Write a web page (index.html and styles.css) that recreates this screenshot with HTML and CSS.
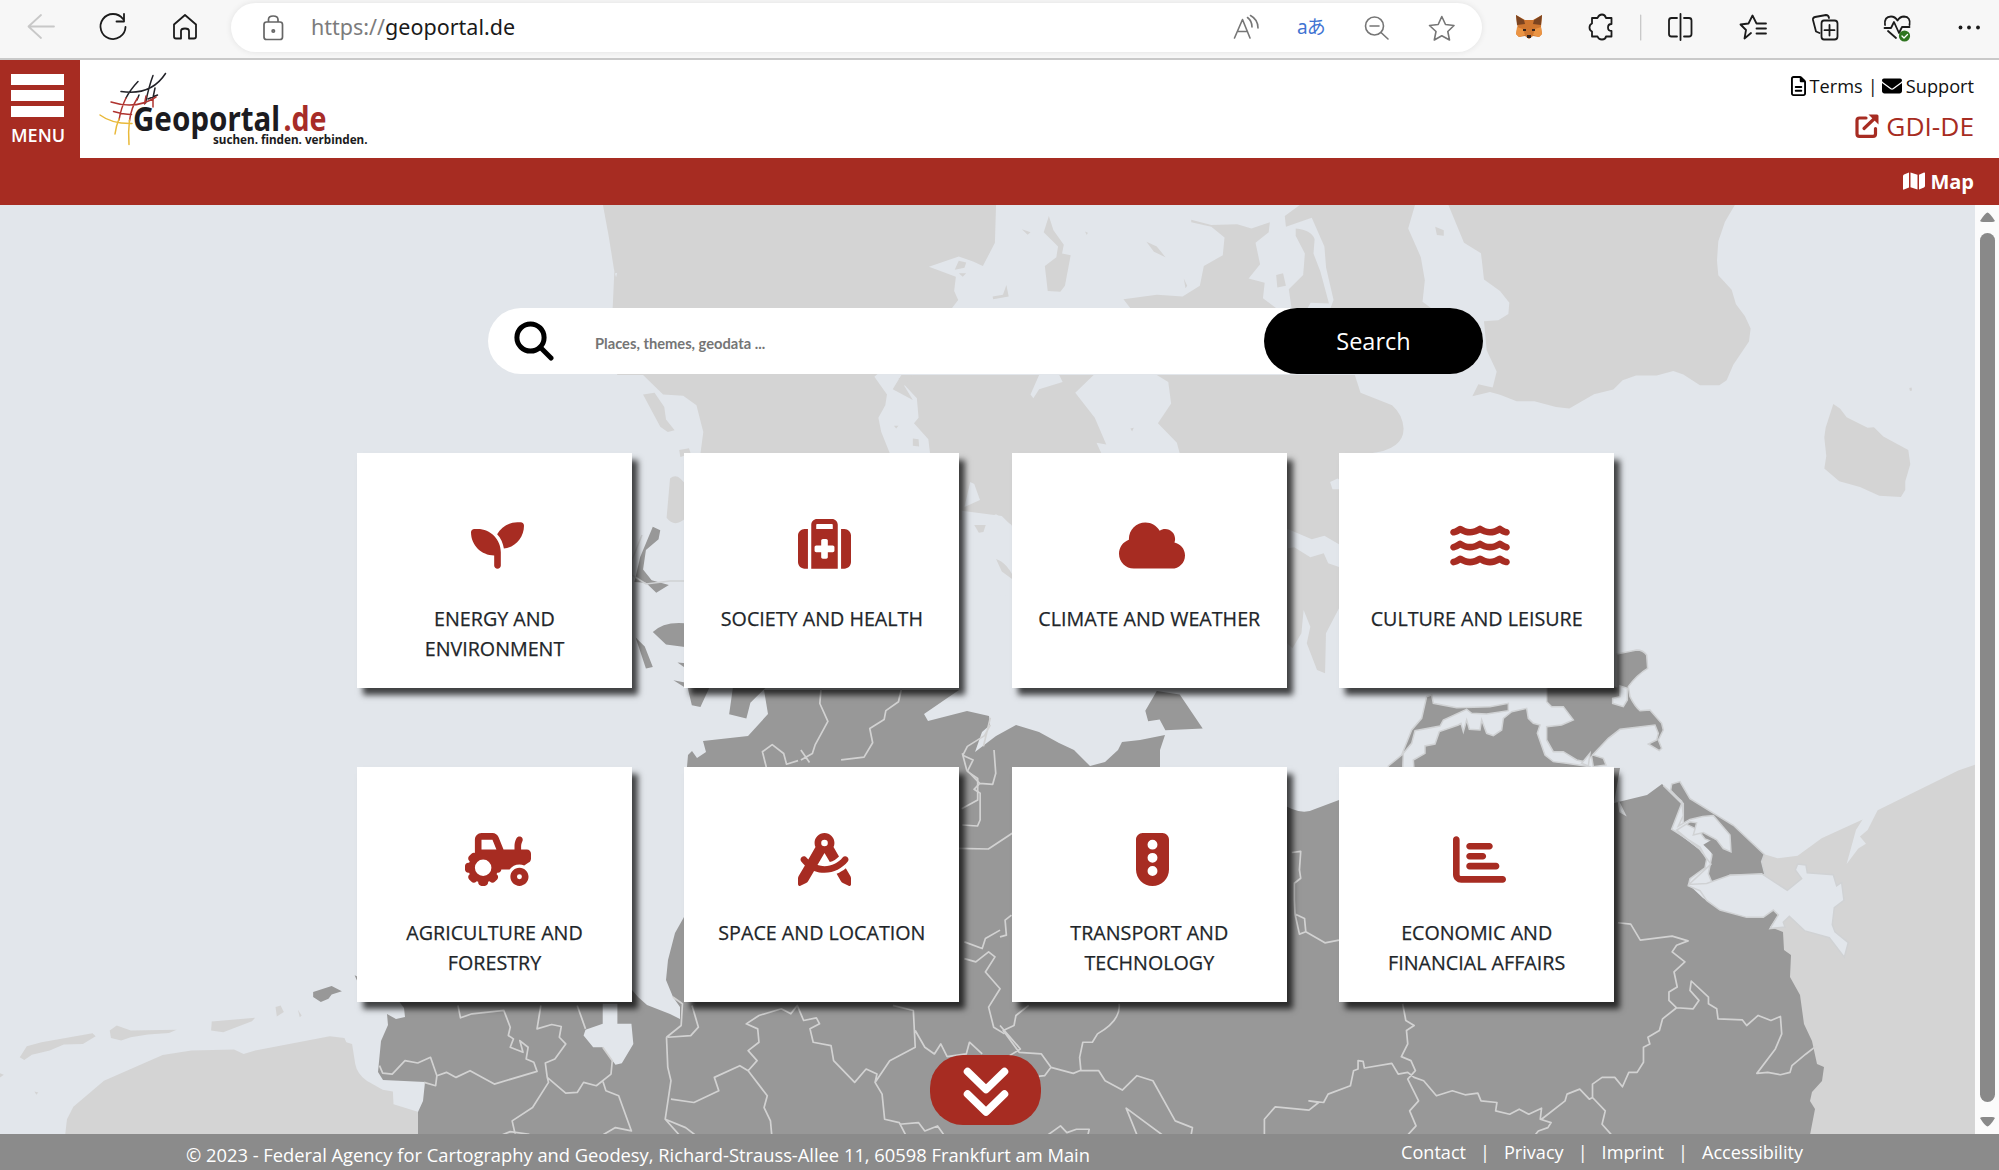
FILE: index.html
```html
<!DOCTYPE html>
<html lang="en">
<head>
<meta charset="utf-8">
<title>Geoportal.de</title>
<link rel="stylesheet" href="styles.css">
</head>
<body>
<div class="toolbar">
  <svg class="tools-left" width="231" height="56" viewBox="0 0 231 56">
    <path class="back" d="M54 26.500H29M41 15L28.500 26.500 41 38"/>
    <path d="M123 19A12.500 12.500 0 1 0 125.500 27M124 14V21.500H116.500"/>
    <path d="M174 24.500L185 15 196 24.500V36.500Q196 38.500 194 38.500H189V31Q189 28.500 185 28.500T181 31V38.500H176Q174 38.500 174 36.500Z"/>
  </svg>
  <div class="address">
    <svg class="lock" width="22" height="26" viewBox="262 14 22 26"><rect x="264" y="21" width="18.500" height="17.500" rx="2.500"/><path d="M268.500 21V18.500Q268.500 15 273.200 15T278 18.500V21"/><circle cx="273.300" cy="30" r="1.200"/></svg>
    <span class="url"><i>https://</i>geoportal.de</span>
    <svg class="address-tools" width="232" height="30" viewBox="1230 12 232 30">
      <path d="M1234.500 37L1242.500 18.500 1250 37M1237.500 30.500H1247.500M1247.500 16.500Q1252 20 1252 26M1250.500 14.500Q1258 18.500 1258 27"/>
      <circle cx="1374.500" cy="25" r="9"/><path d="M1381 31.500L1388 38M1370 25H1379"/>
      <path d="M1441.800 15.500L1445.500 23.500 1454 24.500 1447.800 30.500 1449.500 39 1441.800 34.800 1434.300 39 1436 30.500 1429.500 24.500 1438.200 23.500Z"/>
      <text x="1297" y="33">aあ</text>
    </svg>
  </div>
  <svg class="tools-right" width="517" height="56" viewBox="1482 0 517 56">
    <g class="fox"><path fill="#cf762f" d="M1516 15L1525 20H1533L1542 15 1541 27 1542 34 1539 37 1533 36 1529 39 1525 36 1519 37 1516 34 1517.500 27Z"/><path fill="#7c4420" d="M1516 15L1524 20 1525 24 1517 25ZM1542 15L1534 20 1533 24 1541 25Z"/><path fill="#eb9443" d="M1517 27L1523 29 1525 35 1519 37 1516 34ZM1541 27L1535 29 1533 35 1539 37 1542 34Z"/><path fill="#36251d" d="M1523 29H1526V31H1523ZM1532 29H1535V31H1532ZM1527 35H1531V38H1527Z"/></g>
    <path d="M1592 18H1597.500Q1599 14.500 1602 14.500T1606 18H1611.500V24Q1608 24 1608 27.500T1611.500 31V36.500H1606Q1605.500 39.500 1602 39.500T1597.500 36.500H1592V31.500Q1589.500 30.500 1589.500 27.500T1592 23.500Z"/>
    <path class="sep" d="M1640.700 15V40"/>
    <path d="M1677 18H1671.500Q1669 18 1669 20.500V34Q1669 36.500 1671.500 36.500H1677M1684 18H1689Q1691.500 18 1691.500 20.500V34Q1691.500 36.500 1689 36.500H1684M1680.500 14V40"/>
    <path d="M1751 33L1744.500 38.500 1746 30 1740.500 24.500 1748.500 23.500 1752.500 15.500 1756.500 23.500H1766M1756.500 28.500H1766M1756.500 33.500H1766"/>
    <path d="M1819.500 33L1816 31.500 1813 20Q1812.500 17.500 1815 17L1826 15Q1828.500 15 1829 18M1824 20.500H1834.500Q1837.500 20.500 1837.500 23.500V36.500Q1837.500 39.500 1834.500 39.500H1824Q1821.500 39.500 1821.500 36.500V23.500Q1821.500 20.500 1824 20.500ZM1829.500 25V35.500M1824.500 30.200H1834.500"/>
    <path d="M1885 25Q1884 16.500 1891 16.500 1895 16.500 1897.500 20.500 1900 16.500 1904 16.500 1911 17 1909.500 25M1888 31L1896 38M1884.500 28H1891L1894 22 1899 33 1902 27H1909.500"/>
    <circle class="ok" cx="1904.500" cy="36" r="5.600"/><path class="tick" d="M1902 36L1904 38 1907.500 34.500"/>
    <g class="dots"><circle cx="1960.500" cy="27.500" r="1.900"/><circle cx="1969" cy="27.500" r="1.900"/><circle cx="1978" cy="27.500" r="1.900"/></g>
  </svg>
</div>

<header class="header">
  <button class="menu"><span></span><span></span><span></span><b>MENU</b></button>
  <svg class="logo" width="280" height="90" viewBox="95 66 280 90">
    <g class="grid-lines">
      <path class="k" d="M121 91.500Q151 96 165.500 73.500M138 81.500Q130 90 126 98M153 75.500Q149 86 145.500 103M155 88L152.500 100M139 95L137 100M148 99L157.500 95"/>
      <path class="r" d="M126 98Q121 108 119 120M137.500 98Q131 108 129.500 121M111 102Q136 110 156 97M113.500 111.500Q124 114.500 131.500 114.500M146 96L144.500 104M153 99V107"/>
      <path class="y" d="M119 119Q116 126 115 134M129.500 120Q128 132 129 144.500M100 115Q112 124 132 123.500"/>
    </g>
    <text class="brand" x="133" y="130.500" textLength="147" lengthAdjust="spacingAndGlyphs">Geoportal</text>
    <text class="brand red" x="283.500" y="130.500" textLength="43" lengthAdjust="spacingAndGlyphs">.de</text>
    <text class="claim" x="213" y="144" textLength="154.500" lengthAdjust="spacingAndGlyphs">suchen. finden. verbinden.</text>
  </svg>
  <nav class="top-links">
    <div class="row">
      <svg width="15" height="20" viewBox="0 0 384 512"><path d="M64 464c-8.800 0-16-7.200-16-16V64c0-8.800 7.200-16 16-16H224v80c0 17.700 14.300 32 32 32h80V448c0 8.800-7.200 16-16 16H64zM64 0C28.700 0 0 28.700 0 64V448c0 35.300 28.700 64 64 64H320c35.300 0 64-28.700 64-64V154.500c0-17-6.700-33.300-18.700-45.300L274.700 18.700C262.700 6.700 246.500 0 229.500 0H64zm56 256a24 24 0 0 0 0 48H264a24 24 0 0 0 0-48H120zm0 96a24 24 0 0 0 0 48H264a24 24 0 0 0 0-48H120z"/></svg>
      <a>Terms</a><span class="bar">|</span>
      <svg width="20" height="20" viewBox="0 0 512 512"><path d="M48 64C21.500 64 0 85.500 0 112c0 15.100 7.100 29.300 19.200 38.400L236.800 313.600c11.400 8.500 27 8.500 38.400 0L492.800 150.400c12.100-9.100 19.200-23.300 19.200-38.400c0-26.500-21.500-48-48-48H48zM0 176V384c0 35.300 28.700 64 64 64H448c35.300 0 64-28.700 64-64V176L294.400 339.200c-22.800 17.100-54 17.100-76.800 0L0 176z"/></svg>
      <a>Support</a>
    </div>
    <div class="row gdi">
      <svg width="24" height="24" viewBox="0 0 24 24"><path class="ext" d="M11 4H4.500Q2 4 2 6.500V20Q2 22.300 4.500 22.300H18Q20.500 22.300 20.500 20V14.500M9 14.500L20 4"/><path d="M13.500 .5H22Q23.500 .5 23.500 2V10.500Z"/></svg>
      <a>GDI-DE</a>
    </div>
  </nav>
</header>
<div class="mapbar">
  <svg width="22" height="18" viewBox="0 0 22 18"><path d="M0 4Q0 3 1 2.500L6 .5V15.500L1 17.500Q0 18 0 17ZM7.500 .5L14.500 2.800V17.500L7.500 15.300ZM16 2.700L21 .5Q22 .3 22 1.300V14Q22 15 21 15.400L16 17.500Z"/></svg>
  <a>Map</a>
</div>

<main class="main">
  <div class="stage">
    <svg class="map" width="1975" height="929" viewBox="0 205 1975 929">
      <!-- Denmark -->
      <g transform="translate(600 200) scale(.574 .3571)">
        <path class="land" d="M5 13H690L688 120 667 185 650 172 625 158 573 187 620 215 617 255 624 280 612 305 478 495 500 545 497 575 485 610 490 650 505 710V1300H200L175 710 180 650 168 575 145 548 110 545 75 490 30 490 22 305 25 200 15 100Z"/>
        <path class="land" d="M75 545L95 540 112 580 115 615 130 645 118 650 105 635ZM138 700L155 695 158 710 140 720ZM122 780Q135 760 150 800V890Q130 920 116 890Z"/>
        <path class="land" d="M520 500L552 555 555 610 547 625 572 670 575 710 600 900 635 895 655 905 690 880 717 910V1060L900 900 875 715 865 680 882 685 862 610 828 540 860 490H800L806 510 765 530 755 555 750 545 765 490H545Z"/>
        <path class="sea" d="M645 790L652 795 662 840 635 860ZM630 870L700 885 725 925V1110L630 1100Z"/>
        <path class="land" d="M652 910L672 910 668 930 660 932ZM690 1005Q710 1015 725 1070L700 1040ZM545 490L530 520 545 560 510 530 525 490ZM1030 55L1065 70 1110 68 1135 80 1167 62 1165 90 1142 120 1150 180 1130 220 1158 232 1155 275 1180 305H925L912 278 970 265 1015 270 1045 240 1052 185 1085 155 1088 105 1065 75 1030 62Z"/>
        <path class="land" d="M970 490L990 510 995 570 972 625 1005 680 1010 710 1196 920 1240 950 1262 940 1288 965V710H1340Q1400 700 1400 640 1398 600 1380 575L1325 540 1315 490ZM1220 13H1420L1408 80 1430 160 1437 225 1433 285 1450 305H1272L1278 280 1265 190 1262 130 1240 50 1195 75 1193 45ZM1212 80Q1240 85 1245 110L1243 150 1255 200 1270 290 1238 288 1232 305H1205L1200 250 1225 210 1228 150 1212 100ZM782 45L790 85 808 125 805 150 820 155 810 240 802 257 780 255 775 185 795 160 798 130 773 90ZM735 82L750 90 745 97ZM845 88L850 92 848 98ZM952 117L970 130 985 160 965 145ZM708 238L712 270 685 278 684 270 702 265ZM625 170L638 175 635 190 618 195ZM625 205L638 205 632 215ZM1017 220L1023 240 1020 247ZM1178 210L1190 205 1195 240 1180 245ZM1455 75L1470 85 1470 100 1458 98ZM512 632L520 632 516 640ZM545 668L555 670 556 690 545 688ZM924 640L930 638 927 648Z"/>
        <path class="sea" d="M1272 790L1285 780 1300 795V810H1276ZM30 204L28 216 26 206Z"/>
      </g>
      <g transform="translate(980 440) scale(.4464 .3333)">
        <path class="land" d="M690 325L704 322 740 352 770 340 780 370 806 382V500L775 580 773 700 755 690 732 610 740 560 725 510 720 580 700 625 680 600Z"/>
      </g>
      <!-- Sweden, Bornholm and Poland -->
      <g transform="translate(1500 200) scale(.3333 .4847)">
        <path class="land" d="M-155 10H705L675 45 655 85 651 125 655 155 695 185 708 215 735 240 752 265 747 292 700 340 680 372 658 382H600L550 360 520 353 470 362H408L368 372 340 391 282 401 208 430 168 427 103 415H50L0 402-30 396-83 405-65 380-22 387-10 354-40 310-48 250-5 248 25 235 28 212 0 188-48 164-57 110-108 88Z"/>
        <path class="land" d="M1000 421L1020 430 1040 448 1103 470 1122 469 1150 488 1225 516 1231 545 1216 580V598L1203 613 1138 610 1080 592 1018 580 973 554 979 528 973 490 977 470ZM1228 388L1235 387 1236 393 1230 394Z"/>
        <path class="land" d="M1425 1165L1375 1177 1133 1259 1103 1300 1080 1313 1098 1328 1075 1338 1040 1370 1068 1300 1088 1278 965 1317 893 1353 833 1358 793 1350 700 1400 840 1950H1425Z"/>
      </g>
      <!-- Netherlands and the West Frisian islands -->
      <g transform="translate(0 900) scale(.6378 .3347)">
        <path class="land" d="M102 705L105 655 115 618 163 540 255 463 300 450 367 447 382 460 400 450 517 407 540 412 543 425 552 430 557 490Q560 520 575 540L600 567 616 572 617 610 655 633 662 705ZM31 470L42 437 65 425 145 398 150 407 130 430 100 432 78 450 50 462 38 478ZM172 390L183 375 205 390 277 388 265 397 232 402 205 410 190 420 174 412ZM332 363L400 352 395 362 350 395 331 390ZM432 320L440 315 445 335 434 348ZM467 328L473 345 470 350ZM0 518L6 522 0 530ZM54 572L60 575 57 582Z"/>
      </g>
      <!-- Germany -->
      <path class="de" d="M764 690H959L924 714 928 721 967 711 989 716 990 725 982 732 975 752 996 736 1016 725 1039 732 1059 743 1074 750 1090 766 1105 762 1118 750 1122 742 1140 740 1165 735 1160 750V770L1278 801Q1300 817 1315 809L1339 800V790L1380 780 1390 768H1620L1614 803 1647 795 1662 784 1682 803 1672 829 1700 850 1710 864 1688 884 1703 898 1720 910 1747 917H1763L1773 910 1778 915 1770 927 1783 932 1784 950 1791 955 1790 977 1800 995 1804 1024 1812 1041 1817 1064 1824 1067 1822 1081 1812 1092 1810 1101 1815 1109 1810 1135H418V1112L423 1101 425 1082 383 1080 378 1072 381 1041 388 1025 387 1014 396 1019 405 1017 404 1008 398 1000 632 990 638 997 647 1005 670 1014 680 1019V1007L673 997 666 980 668 960 675 933 684 917 687 767 688 755 692 751 697 758 706 752 703 741 748 736 768 714Z"/>
      <g class="de" transform="translate(600 200) scale(.574 .3571)">
        <path d="M152 1360L160 1415 175 1420 192 1360ZM232 1360L225 1440 255 1452 262 1408 292 1360ZM970 1375L1010 1385 1050 1480 985 1485 975 1455 955 1460 950 1430ZM92 915L105 925 102 950 80 980 75 1035 90 1065 120 1078 98 1100 80 1072 60 1070 70 1000ZM92 1210Q110 1180 148 1185V1252L115 1245ZM62 1225L78 1250 92 1308 80 1312ZM135 1295L150 1297 148 1310ZM128 1345L150 1352 148 1365Z"/>
      </g>
      <path class="shore" d="M642 535L632 560 632 575 646 584 670 581H684"/>
      <!-- Darss and Ruegen -->
      <g transform="translate(1390 640) scale(.3333)">
        <path class="de coast" d="M-5 378L35 345 65 270 95 235 110 170 125 165 130 190 200 203 300 200 355 190V212L290 222 245 220 230 208 160 240 150 258 75 272 65 310 40 340 38 390H-5ZM72 390L70 360 105 340V318L135 312 148 275 205 255 213 250 220 275 230 240 238 268 270 270 275 240 290 280 310 287 335 270 340 235 365 215 410 205 415 235 430 250 450 255 442 280 465 345 490 365 530 370 600 380V390ZM470 185V140H680V42L740 30Q760 30 770 45L773 85Q740 105 715 140L720 170Q735 200 750 212L780 210 815 250 820 270 805 300 815 325 808 332 775 312 800 300 805 280 795 255 690 268 655 295 608 345 640 355 648 375 610 380 605 350 585 365 560 360 520 335 490 335 470 300V260L515 255 550 240 520 200 485 200Z"/>
        <path class="sea coast" d="M690 138L712 145V180L700 200 668 190V175L690 170ZM575 370L600 340 595 378Z"/>
      </g>
      <g transform="translate(1500 200) scale(.3333 .4847)">
        <path class="de coast" d="M512 1218L515 1205 540 1200 570 1235 640 1265 700 1290 793 1350 785 1365 795 1392 690 1393 640 1415 625 1390 635 1355 640 1325 615 1318 595 1300 550 1285 550 1245Z"/>
        <path class="sea coast" d="M608 1272L640 1270 690 1310 693 1345 670 1338 650 1320 610 1305 580 1310 590 1285 570 1283 530 1300 600 1340 633 1370 567 1412 620 1410 690 1393 785 1390 862 1424 905 1400 886 1382 893 1370 918 1372 922 1388 1000 1392 1010 1415 1025 1408 1032 1445 1003 1460 997 1495 1005 1510 1045 1532 1033 1562 988 1522 915 1508 868 1478 850 1490 855 1500 810 1503 835 1475 820 1465 790 1480 740 1480 660 1465 620 1445 600 1425 565 1415 570 1400 615 1378 620 1360 600 1335 515 1298 545 1245 490 1208 545 1240 550 1270 535 1292 570 1278Z"/>
        <path class="sea coast" d="M355 1240L375 1268 360 1262Z"/>
        <path class="de" d="M610 1330L640 1318 655 1335 645 1355 625 1340Z"/>
      </g>
      <g transform="translate(0 900) scale(.6378 .3347)">
        <path class="sea" d="M945 310H968V370H990L993 430 975 488 965 492 945 440 930 440 915 405 918 388 945 370Z"/>
        <path class="de" d="M491 275L520 257 536 273 520 282 515 295 503 305 491 290ZM556 225L562 230V250Z"/>
        <g class="border">
          <path d="M718 315L722 352 740 340 790 330 800 380 797 405 805 415 800 440 820 455 815 420 828 440 825 475 837 485 842 512 775 550 737 510 715 530 700 515 685 525 675 470 655 487 635 480 615 520 600 517 595 495M685 525L683 555 665 545M848 315L842 385 865 372 880 378 877 410 887 430 870 475 855 487 858 530 887 577 905 575 915 545 935 555 958 520 960 480 945 440M905 315L918 385M858 530L860 545 835 620 803 660 808 702M945 540L950 570 970 585 990 690 965 680 945 702M1045 410L1047 500 1052 540 1043 655 1065 702M1043 655L1075 680 1090 702M1047 410L1083 405 1095 380 1085 315M1055 290L1070 310 1068 375 1045 410M1052 595L1088 605 1127 570 1120 530 1160 495 1173 510 1203 585 1198 620 1208 660 1210 702M1173 510L1187 480 1173 450 1190 425 1188 385 1170 370 1190 345 1225 325 1240 340 1250 315 1260 360 1280 352 1285 370 1270 385 1275 425 1303 435 1307 480 1340 545 1358 505 1375 520 1372 545 1383 580 1387 655 1410 665 1420 702M1372 545L1395 480 1435 440 1432 330 1400 315M1435 390L1450 440 1465 460 1475 430 1485 468 1515 460 1520 425 1540 460M1410 670L1440 665 1450 690 1470 675 1480 702M787 702L800 692 830 700M1512 125L1540 145 1545 115 1568 90M1512 175L1530 185 1550 155 1560 170 1545 215 1568 265 1550 320 1558 380 1575 400"/>
        </g>
      </g>
      <g class="border" transform="translate(1000 900) scale(.6371 .3347)">
        <path d="M45 315L25 345 22 375 5 390 30 455 65 460 80 500 115 518 125 510H155L165 540 192 568 215 525 240 540 275 660 302 680 300 702M0 375L32 445 15 465M80 500L70 525 45 530M187 310Q190 360 153 400L145 425 130 425 125 470 127 510M215 702L198 622 255 702M75 702L95 675 105 695 120 685 140 685 138 702M415 702L415 655 432 618 485 628 500 605 485 600 508 605 515 580 550 555 555 510 562 505V480L570 482 572 502 615 488 625 520 640 515 650 530 665 540 685 585 710 570 730 582 750 577 755 600 780 605 778 630 800 640 815 625 830 640 850 622 848 655 865 665 860 680 845 690 840 702M632 310L637 360 650 375 638 390 640 430 630 468 645 480 652 510 640 535 657 600 643 630 653 675 640 702M960 702L945 670 950 630 930 590 925 595 910 565 890 580 887 600 850 655M930 590L930 550 945 530 965 530 977 558 987 515 1000 515 1010 485 1010 440 1020 430 1017 410 1035 390 1040 355 1062 322 1050 300 1050 275 1063 260 1058 215 1075 185 1055 155 1062 135 1080 122 1055 108 1005 120 990 72 970 68M1062 322L1088 325 1097 300 1083 270 1085 242 1112 290 1112 310 1125 325 1127 355 1165 358 1172 375 1190 345 1210 360 1225 348 1227 400 1217 445 1188 518 1205 515 1225 522 1240 515 1243 495 1265 460 1282 435M458 -142L472 -145 470 -90 472 -65 462 -50V0L463 42 478 55 480 95 510 128 532 120M463 42L470 102 480 95M0 110L10 105 8 60 18 45"/>
      </g>
      <g class="border" transform="translate(600 200) scale(.574 .3571)">
        <path d="M385 1370L383 1410 397 1460 375 1525 370 1550 350 1568M525 1370L520 1405 498 1430 495 1455 470 1480 475 1520 460 1560 420 1568M290 1590L283 1545 300 1525 320 1550 325 1580 345 1570M350 1540L365 1575M680 1470L670 1500 640 1530 632 1555 650 1568 640 1600 658 1620V1680L630 1705M680 1450L668 1530"/>
      </g>
      <g class="border" transform="translate(340 750) scale(.4337 .3333)">
        <path d="M1435 10L1445 60 1475 100 1462 118 1476 130V210L1470 228 1435 225M1475 100L1505 103 1512 70 1508 0M1425 295L1495 297 1550 250"/>
      </g>
    </svg>

    <form class="search">
      <svg width="40" height="40" viewBox="0 0 40 40"><circle cx="16.500" cy="16.500" r="13.600"/><path d="M26.500 26.500L37 37"/></svg>
      <span class="hint">Places, themes, geodata ...</span>
      <span class="submit">Search</span>
    </form>

    <div class="cards">
      <a class="card"><svg width="53" height="53" viewBox="0 0 512 512"><path d="M512 64c0 113.600-84.600 207.500-194.200 222c-7.100-53.400-30.600-101.600-65.300-139.300C290.800 78.300 364 32 448 32h32c17.700 0 32 14.300 32 32zM0 128C0 110.300 14.300 96 32 96H64c123.700 0 224 100.300 224 224v128c0 17.700-14.300 32-32 32s-32-14.300-32-32V352C100.300 352 0 251.700 0 128z"/></svg><span>ENERGY AND<br>ENVIRONMENT</span></a>
      <a class="card"><svg width="53" height="53" viewBox="0 0 512 512"><path d="M184 48H328c4.400 0 8 3.600 8 8V96H176V56c0-4.400 3.600-8 8-8zm-56 8V96v32V480H384V128 96 56c0-30.900-25.100-56-56-56H184c-30.900 0-56 25.100-56 56zM96 96H64C28.700 96 0 124.700 0 160V416c0 35.300 28.700 64 64 64H96V96zM416 480h32c35.300 0 64-28.700 64-64V160c0-35.300-28.700-64-64-64H416V480zM224 208c0-8.800 7.200-16 16-16h32c8.800 0 16 7.200 16 16v48h48c8.800 0 16 7.200 16 16v32c0 8.800-7.200 16-16 16H288v48c0 8.800-7.200 16-16 16H240c-8.800 0-16-7.200-16-16V320H176c-8.800 0-16-7.200-16-16V272c0-8.800 7.200-16 16-16h48V208z"/></svg><span>SOCIETY AND HEALTH</span></a>
      <a class="card"><svg width="66" height="53" viewBox="0 0 640 512"><path d="M0 336c0 79.500 64.500 144 144 144H512c70.700 0 128-57.300 128-128c0-61.900-44-113.600-102.400-125.400c4.100-10.700 6.400-22.400 6.400-34.600c0-53-43-96-96-96c-19.700 0-38.100 6-53.300 16.200C367 64.200 315.300 32 256 32C167.600 32 96 103.600 96 192c0 2.700 .1 5.400 .2 8.100C40.200 219.800 0 273.200 0 336z"/></svg><span>CLIMATE AND WEATHER</span></a>
      <a class="card"><svg width="60" height="53" viewBox="0 0 576 512"><defs><path id="wave" d="M269.500 69.900c11.100-7.900 25.900-7.900 37 0C329 85.400 356.500 96 384 96c26.900 0 55.400-10.800 77.400-26.100c11.900-8.500 28.100-7.800 39.200 1.700c14.400 11.900 32.500 21 50.600 25.200c17.200 4 27.900 21.200 23.900 38.400s-21.200 27.900-38.400 23.900c-24.500-5.700-44.900-16.500-58.200-25C449.500 149.700 417 160 384 160c-31.900 0-60.600-9.900-80.400-18.900c-5.800-2.700-11.100-5.300-15.600-7.700c-4.500 2.400-9.700 5.100-15.600 7.700c-19.800 9-48.500 18.900-80.400 18.900c-33 0-65.500-10.300-94.500-25.800c-13.400 8.400-33.700 19.300-58.200 25c-17.200 4-34.400-6.700-38.400-23.900s6.700-34.400 23.900-38.400C42.800 92.600 61 83.500 75.300 71.600c11.100-9.500 27.300-10.100 39.200-1.700C136.700 85.200 165.100 96 192 96c27.500 0 55-10.600 77.500-26.100z"/></defs><use href="#wave"/><use href="#wave" y="144"/><use href="#wave" y="288"/></svg><span>CULTURE AND LEISURE</span></a>
      <a class="card"><svg width="66" height="53" viewBox="0 0 640 512"><path fill-rule="evenodd" d="M96 64c0-35.300 28.700-64 64-64H266.300c26.200 0 49.700 15.900 59.400 40.200L373.700 160H480V126.200c0-24.800 5.800-49.300 16.900-71.600l2.500-5c7.900-15.800 27.100-22.200 42.900-14.300s22.200 27.100 14.300 42.900l-2.500 5c-6.700 13.300-10.100 28-10.100 42.900V160h56c22.100 0 40 17.900 40 40v45.400c0 16.500-8.500 31.900-22.600 40.700l-43.300 27.100c-14.200-5.900-29.800-9.200-46.100-9.200c-39.300 0-74.100 18.900-96 48H352c0 17.700-14.300 32-32 32h-8.200c-1.700 4.800-3.700 9.500-5.800 14.100l5.800 5.800c12.500 12.500 12.500 32.800 0 45.300l-22.600 22.600c-12.500 12.500-32.800 12.500-45.300 0l-5.800-5.800c-4.600 2.200-9.300 4.100-14.100 5.800V480c0 17.700-14.300 32-32 32H160c-17.700 0-32-14.300-32-32v-8.200c-4.800-1.700-9.500-3.700-14.100-5.800l-5.800 5.800c-12.500 12.500-32.800 12.500-45.300 0L40.200 449.100c-12.500-12.500-12.500-32.800 0-45.300l5.800-5.800c-2.200-4.600-4.100-9.300-5.800-14.100H32c-17.700 0-32-14.300-32-32V320c0-17.700 14.300-32 32-32h8.200c1.700-4.800 3.700-9.500 5.800-14.100l-5.800-5.800c-12.500-12.500-12.500-32.800 0-45.300l22.600-22.600c9-9 21.900-11.500 33.100-7.600V64zm170.300 0H160v96h32H304.700L266.300 64zM176 256a80 80 0 1 0 0 160 80 80 0 1 0 0-160zM528 448a24 24 0 1 0 0-48 24 24 0 1 0 0 48zm0 64c-48.600 0-88-39.400-88-88s39.400-88 88-88s88 39.400 88 88s-39.400 88-88 88z"/></svg><span>AGRICULTURE AND<br>FORESTRY</span></a>
      <a class="card"><svg width="53" height="53" viewBox="0 0 512 512"><path fill-rule="evenodd" d="M352 96c0 14.300-3.100 27.900-8.800 40.200L396 227.400c-23.700 25.300-54.200 44.100-88.500 53.600L256 192l-68 117.500c21.500 6.800 44.300 10.500 68.100 10.500c70.700 0 133.800-32.700 174.900-84c11.100-13.800 31.200-16 45-5s16 31.200 5 45C428.100 341.800 347 384 256 384c-35.400 0-69.400-6.400-100.700-18.100L98.700 463.700C94 471.800 87 478.400 78.600 482.600L23.200 510.300c-5 2.500-10.900 2.200-15.600-.7S0 501.500 0 496V440.600c0-8.400 2.200-16.700 6.500-24.100l60-103.700C53.700 301.600 41.800 289.300 31.200 276c-11.100-13.800-8.800-33.900 5-45s33.900-8.800 45 5c5.700 7.100 11.800 13.800 18.200 20.100l69.400-119.900c-5.600-12.200-8.800-25.800-8.800-40.200c0-53 43-96 96-96s96 43 96 96zm21 297.900c32.600-12.800 62.500-30.800 88.900-52.900l43.700 75.500c4.200 7.300 6.500 15.600 6.500 24.100V496c0 5.500-2.900 10.700-7.600 13.600s-10.600 3.200-15.600 .7l-55.400-27.700c-8.400-4.200-15.400-10.800-20.100-18.900L373 393.900zM256 128a32 32 0 1 0 0-64 32 32 0 1 0 0 64z"/></svg><span>SPACE AND LOCATION</span></a>
      <a class="card"><svg width="33" height="53" viewBox="0 0 320 512"><path fill-rule="evenodd" d="M64 0C28.700 0 0 28.700 0 64V352c0 88.400 71.600 160 160 160s160-71.600 160-160V64c0-35.300-28.700-64-64-64H64zm96 416a48 48 0 1 1 0-96 48 48 0 1 1 0 96zm48-176a48 48 0 1 1-96 0 48 48 0 1 1 96 0zm-48-80a48 48 0 1 1 0-96 48 48 0 1 1 0 96z"/></svg><span>TRANSPORT AND<br>TECHNOLOGY</span></a>
      <a class="card"><svg width="53" height="53" viewBox="0 0 512 512"><path d="M32 32c17.700 0 32 14.300 32 32V400c0 8.800 7.200 16 16 16H480c17.700 0 32 14.300 32 32s-14.300 32-32 32H80c-44.200 0-80-35.800-80-80V64C0 46.300 14.300 32 32 32zm96 96c0-17.700 14.300-32 32-32h192c17.700 0 32 14.300 32 32s-14.300 32-32 32h-192c-17.700 0-32-14.300-32-32zm32 64H288c17.700 0 32 14.300 32 32s-14.300 32-32 32H160c-17.700 0-32-14.300-32-32s14.300-32 32-32zm0 96H416c17.700 0 32 14.300 32 32s-14.300 32-32 32H160c-17.700 0-32-14.300-32-32s14.300-32 32-32z"/></svg><span>ECONOMIC AND<br>FINANCIAL AFFAIRS</span></a>
    </div>
    <button class="down"><svg width="50" height="54" viewBox="0 0 50 54"><path d="M6.500 6.500L25 24.500 43.500 6.500M6.500 29L25 47 43.500 29"/></svg></button>
  </div>
  <div class="scrollbar">
    <svg width="15" height="10" viewBox="0 0 15 10"><path d="M0 9Q5 1 7.500 .5 10 1 15 9 14 10 12 10H3Q1 10 0 9Z"/></svg>
    <div class="thumb"></div>
    <svg width="15" height="10" viewBox="0 0 15 10"><path d="M0 1Q5 9 7.500 9.500 10 9 15 1 14 0 12 0H3Q1 0 0 1Z"/></svg>
  </div>
</main>

<footer class="footer">
  <span class="copy">© 2023 - Federal Agency for Cartography and Geodesy, Richard-Strauss-Allee 11, 60598 Frankfurt am Main</span>
  <nav><a>Contact</a><i>|</i><a>Privacy</a><i>|</i><a>Imprint</a><i>|</i><a>Accessibility</a></nav>
</footer>
</body>
</html>
```

FILE: styles.css
```css
* { box-sizing: border-box; }
body { margin: 0; width: 1999px; height: 1170px; overflow: hidden; display: flex; flex-direction: column; background: #fff; font-family: "Open Sans", "Noto Sans", sans-serif; }
svg { display: block; flex: none; }
button { border: 0; font-family: inherit; }

.toolbar { height: 60px; flex: none; display: flex; background: #f7f7f7; border-bottom: 2px solid #c9c9c9; }
.tools-left, .tools-right { fill: none; stroke: #1b1b1b; stroke-width: 1.8; stroke-linejoin: round; stroke-linecap: round; }
.back { stroke: #c8c8c8; }
.sep { stroke: #c4c4c4; stroke-width: 1.2; }
.fox { stroke: none; }
.ok { fill: #2f7520; stroke: none; }
.tick { stroke: #fff; stroke-width: 1.3; }
.dots { fill: #1b1b1b; stroke: none; }
.address { width: 1251px; height: 49px; margin-top: 3px; padding: 0 20px 0 31px; display: flex; align-items: center; border-radius: 25px; background: #fff; box-shadow: 0 0 6px rgba(0,0,0,.09); }
.lock { fill: none; stroke: #666; stroke-width: 1.7; }
.url { margin: -2px 0 0 27px; width: 203px; font-family: "Noto Sans", sans-serif; font-size: 21.500px; white-space: nowrap; color: #1a1a1a; }
.url i { font-style: normal; color: #7c7c7c; }
.address-tools { margin-left: auto; fill: none; stroke: #767676; stroke-width: 1.6; stroke-linejoin: round; stroke-linecap: round; }
.address-tools text { stroke: none; fill: #3f73d2; font: 400 19px "Noto Sans", "Noto Sans CJK JP", sans-serif; letter-spacing: -1px; }

.header { height: 98px; flex: none; display: flex; }
.menu { width: 80px; padding: 14px 16px 0 11px; display: flex; flex-direction: column; gap: 5px; background: #a72c22; color: #fff; }
.menu span { height: 11px; background: #fff; flex: none; }
.menu b { font-size: 18px; font-weight: 600; line-height: 27px; text-align: center; }
.logo { margin: 6px 0 0 15px; overflow: visible; }
.grid-lines { fill: none; stroke-width: 1.5; stroke-linecap: round; }
.k { stroke: #222228; }
.r { stroke: #b03430; }
.y { stroke: #e9b93a; }
.brand { font: bold 34px "Noto Sans", sans-serif; fill: #1c1b20; }
.brand.red { fill: #a72c28; }
.claim { font: bold 12.500px "Noto Sans", sans-serif; fill: #1c1b20; }
.top-links { margin-left: auto; padding: 11px 25px 0 0; display: flex; flex-direction: column; align-items: flex-end; }
.row { display: flex; align-items: center; height: 30px; font-size: 18.200px; color: #111; }
.row svg { margin-right: 4px; }
.bar { margin: 0 4px 0 5px; }
.gdi { height: 36px; margin-top: 7px; font-size: 26.300px; color: #a72c22; fill: #a72c22; }
.gdi svg { margin-right: 7px; }
.ext { fill: none; stroke: #a72c22; stroke-width: 3.2; stroke-linecap: round; }
.mapbar { height: 47px; flex: none; padding: 0 25px 1px 0; display: flex; align-items: center; justify-content: flex-end; gap: 5px; background: #a72c22; color: #fff; fill: #fff; font-size: 20px; font-weight: 700; }

.main { height: 929px; flex: none; display: flex; }
.stage { width: 1975px; position: relative; background: #e2e6eb; }
.map { position: absolute; left: 0; top: 0; }
.land { fill: #d4d4d4; }
.sea { fill: #e2e6eb; }
.coast, .shore { stroke: #d0d2d4; stroke-width: 1.500; vector-effect: non-scaling-stroke; }
.shore { fill: none; }
.de { fill: #989898; }
.border path { fill: none; stroke: #d2d2d2; stroke-width: 1.700; vector-effect: non-scaling-stroke; stroke-linejoin: round; }
.search { position: relative; width: 995px; height: 66px; margin: 103px 0 0 488px; padding-left: 26px; display: flex; align-items: center; border-radius: 33px; background: #fff; }
.search svg { fill: none; stroke: #000; stroke-width: 5; stroke-linecap: round; }
.hint { margin: 3px 0 0 41px; font-family: Lato, sans-serif; font-size: 14.700px; font-weight: bold; color: #757575; }
.submit { width: 219px; height: 66px; margin-left: auto; border-radius: 33px; background: #000; color: #fff; font-size: 23.500px; line-height: 66px; text-align: center; }
.cards { position: relative; margin: 79px 0 0 357px; display: grid; grid-template-columns: repeat(4, 275px); grid-auto-rows: 235px; gap: 79px 52.400px; }
.card { display: flex; flex-direction: column; align-items: center; padding-top: 66px; background: #fff; box-shadow: 6px 7px 6px rgba(0,0,0,.72); color: #212529; fill: #a72c22; font-size: 19.700px; line-height: 29.500px; text-align: center; -webkit-text-stroke: .25px #212529; }
.card svg { margin-left: 6px; }
.card span { margin-top: 32px; }
.down { position: absolute; left: 930px; top: 850px; width: 111px; height: 70px; padding: 0; display: flex; align-items: center; justify-content: center; border-radius: 33px; background: #a72c22; }
.down svg { fill: none; stroke: #fff; stroke-width: 7.500; stroke-linecap: round; stroke-linejoin: round; margin-top: 4px; }
.scrollbar { width: 24px; padding: 7px 4px 7px 5px; display: flex; flex-direction: column; justify-content: space-between; background: #fbfbfb; fill: #898989; }
.thumb { width: 15px; height: 869px; margin-bottom: 4px; border-radius: 8px; background: #898989; }

.footer { height: 36px; flex: none; padding: 0 196px 0 186px; display: flex; justify-content: space-between; background: #8b8b8b; color: #fff; font-size: 18.100px; white-space: nowrap; }
.copy { font-size: 18.320px; line-height: 42px; }
.footer nav { display: flex; line-height: 37px; }
.footer i { font-style: normal; margin: 0 14px; }
```
